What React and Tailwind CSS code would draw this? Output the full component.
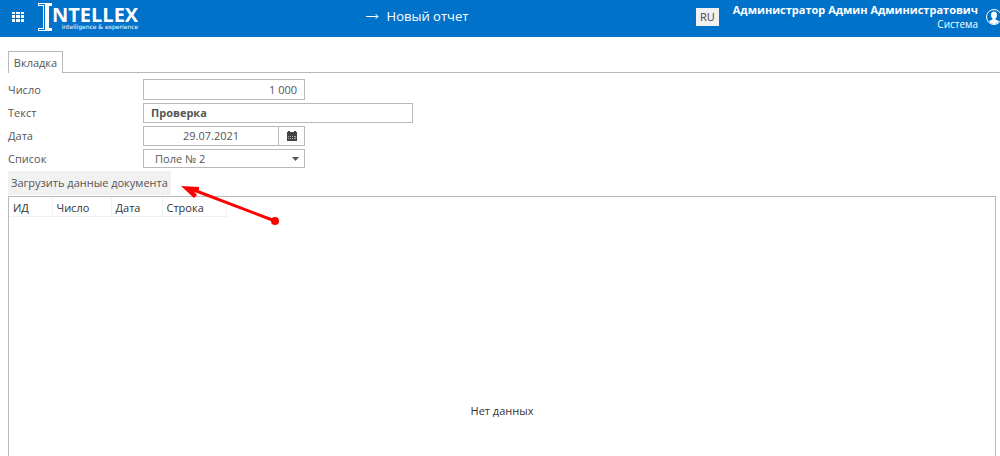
import React from "react";

const COLUMNS = [
  { title: "ИД", width: "w-[43px]" },
  { title: "Число", width: "w-[59px]" },
  { title: "Дата", width: "w-[51px]" },
  { title: "Строка", width: "w-[64px]" },
];

function Logo() {
  return (
    <a href="#home" aria-label="Intellex" className="flex items-start text-white">
      <svg width="14" height="28" viewBox="0 0 14 28" fill="currentColor" shapeRendering="crispEdges" aria-hidden="true">
        <path d="M0 0H14V3H11V25H14V28H0V25H5V3H0Z" />
        <path d="M1 1H6V2H1ZM1 26H6V27H1ZM6 1H7V27H6Z" fill="#0072c9" />
      </svg>
      <span className="flex flex-col items-end pt-0.5">
        <span className="text-[20px] leading-5 font-bold">NTELLEX</span>
        <span className="-mt-0.5 font-['DejaVu_Sans',sans-serif] text-[6px] leading-[8px]">intelligence &amp; experience</span>
      </span>
    </a>
  );
}

function Header() {
  return (
    <header className="flex h-[37px] shrink-0 items-start overflow-hidden bg-[#0072c9] pl-3 text-white">
      <button type="button" aria-label="Меню" className="mt-3 mr-3.5">
        <svg width="12" height="10" viewBox="0 0 12 10" fill="currentColor" shapeRendering="crispEdges">
          <path d="M0 0h3v2H0zM4 0h4v2H4zM9 0h3v2H9zM0 3h3v3H0zM4 3h4v3H4zM9 3h3v3H9zM0 7h3v3H0zM4 7h4v3H4zM9 7h3v3H9z" />
        </svg>
      </button>
      <div className="pt-[3px]">
        <Logo />
      </div>
      <h1 className="flex flex-1 items-center justify-center gap-2 pt-[7px] text-[13px] leading-[18px]">
        <svg width="13" height="7" viewBox="0 0 13 7" fill="none" stroke="currentColor" aria-hidden="true">
          <path d="M0 3.5H12M9.500 1L12 3.500L9.500 6" />
        </svg>
        Новый отчет
      </h1>
      <button type="button" className="mt-2 h-[18px] w-[23px] bg-[#f1f1f1] text-[11px] leading-[18px] text-[#444]">
        RU
      </button>
      <div className="ml-3.5 pt-[3px] text-right">
        <div className="text-[11px] leading-[14px] font-bold">Администратор Админ Администратович</div>
        <div className="text-[10px] leading-[15px]">Система</div>
      </div>
      <button type="button" aria-label="Профиль" className="mt-[9px] -mr-0.5 ml-2 shrink-0">
        <svg width="16" height="16" viewBox="0 0 16 16">
          <circle cx="8" cy="8" r="7.500" fill="none" stroke="white" />
          <path d="M8 2.500C10 2.500 11 4 11 6C11 7.500 10.500 8.500 9.500 9.300V10.500L13 12C12 14 10 15 8 15C6 15 4 14 3 12L6.500 10.500V9.300C5.500 8.500 5 7.500 5 6C5 4 6 2.500 8 2.500Z" fill="white" />
        </svg>
      </button>
    </header>
  );
}

function Field({ id, label, children }) {
  return (
    <div className="flex h-[23px] items-start">
      <label htmlFor={id} className="w-[135px] leading-[22px]">
        {label}
      </label>
      {children}
    </div>
  );
}

function Arrow() {
  return (
    <svg className="pointer-events-none absolute top-3 left-[173px]" width="100" height="44" viewBox="0 0 100 44" fill="red" aria-hidden="true">
      <path d="M10 6L94 38" stroke="red" strokeWidth="3" />
      <path d="M0 3L18 4V7L12 7.500L16 12L13 15Z" />
      <circle cx="94" cy="38" r="4" />
    </svg>
  );
}

export default function App() {
  return (
    <div className="flex h-screen flex-col overflow-hidden bg-white font-['Open_Sans','Noto_Sans',sans-serif] text-[11px] text-[#555]">
      <Header />
      <main className="flex min-h-0 flex-1 flex-col pt-3.5 pr-1 pl-2">
        <div role="tablist" className="flex h-[22px]">
          <button type="button" role="tab" aria-selected="true" className="w-[55px] border border-b-0 border-[#b9b9b9] pt-0.5">
            Вкладка
          </button>
          <div className="-mr-1 flex-1 border-b border-[#b9b9b9]" />
        </div>

        <form className="pt-1.5">
          <Field id="number" label="Число">
            <input id="number" defaultValue="1 000" className="h-[21px] w-[162px] border border-[#b9b9b9] px-[7px] text-right" />
          </Field>
          <Field id="text" label="Текст">
            <input id="text" defaultValue="Проверка" className="mt-px h-5 w-[270px] border border-[#b9b9b9] px-[7px] pb-px font-bold" />
          </Field>
          <Field id="date" label="Дата">
            <div className="mt-px flex h-5 w-[162px] border border-[#b9b9b9]">
              <input id="date" defaultValue="29.07.2021" className="min-w-0 flex-1 text-center" />
              <button type="button" aria-label="Открыть календарь" className="flex w-[26px] items-center justify-center border-l border-[#b9b9b9]">
                <svg width="10" height="10" viewBox="0 0 10 10" fill="#444" shapeRendering="crispEdges">
                  <path d="M1 0h2v1h4V0h2v1h1v9H0V1h1z" />
                  <path d="M1 5h8v1H1zM1 7h8v1H1z" fill="#aaa" />
                  <path d="M2 5h1v1H2zM4 5h1v1H4zM6 5h1v1H6zM2 7h1v1H2zM4 7h1v1H4zM6 7h1v1H6z" />
                </svg>
              </button>
            </div>
          </Field>
          <Field id="list" label="Список">
            <div className="relative mt-px w-[162px]">
              <select id="list" className="block h-[19px] w-full appearance-none border border-[#b9b9b9] pt-px pl-[11px]">
                <option>Поле № 2</option>
              </select>
              <svg className="pointer-events-none absolute top-2 right-1.5" width="7" height="4" viewBox="0 0 7 4" fill="#555" aria-hidden="true">
                <path d="M0 0H7L3.500 4Z" />
              </svg>
            </div>
          </Field>
        </form>

        <div className="relative flex h-[25px] shrink-0 items-start">
          <button type="button" className="h-6 bg-[#f1f1f1] px-[3px]">
            Загрузить данные документа
          </button>
          <Arrow />
        </div>

        <section className="min-h-0 flex-1 border border-b-0 border-[#b9b9b9] text-[#333]">
          <table className="table-fixed border-collapse">
            <thead>
              <tr>
                {COLUMNS.map((column) => (
                  <th key={column.title} scope="col" className={`${column.width} border-r border-b border-[#f1f1f1] px-1 pt-[3px] pb-px text-left leading-[15px] font-normal`}>
                    {column.title}
                  </th>
                ))}
              </tr>
            </thead>
          </table>
          <p className="pt-[186px] text-center leading-4">Нет данных</p>
        </section>
      </main>
    </div>
  );
}
